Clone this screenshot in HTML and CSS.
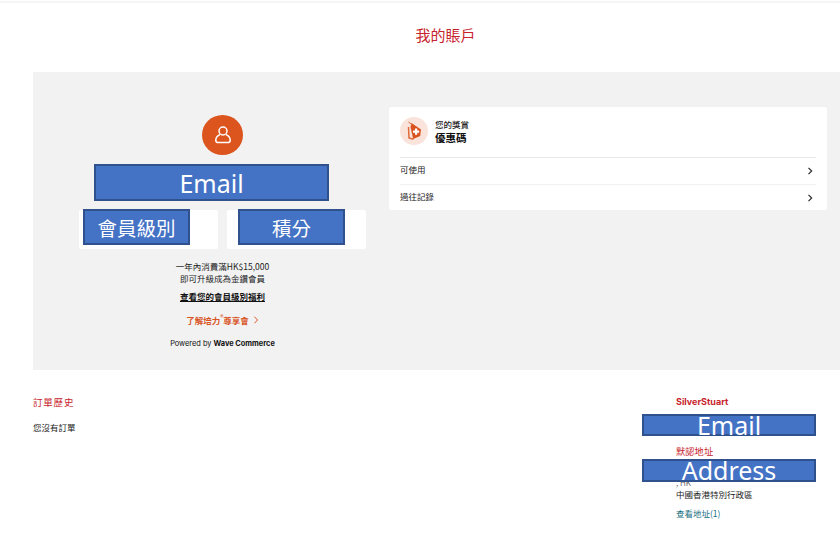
FILE: index.html
```html
<!DOCTYPE html>
<html lang="zh-Hant">
<head>
<meta charset="utf-8">
<title>我的賬戶</title>
<link rel="stylesheet" href="styles.css">
</head>
<body>
<div class="topline"></div>
<h1 class="title">我的賬戶</h1>
<main class="panel">
  <section class="member">
    <div class="avatar">
      <svg width="20" height="20" viewBox="0 0 20 20" fill="none" stroke="#fff" stroke-width="1.500">
        <circle cx="10" cy="6" r="4"/>
        <path d="M7 9.600C4.600 10.600 2.800 12.600 2.800 15.200c0 1.600 1 2.400 2.400 2.400h9.600c1.400 0 2.400-.8 2.400-2.400 0-2.600-1.800-4.600-4.200-5.600"/>
      </svg>
    </div>
    <div class="mask mask-email">Email</div>
    <div class="stats">
      <div class="stat"><div class="mask mask-stat mask-level">會員級別</div></div>
      <div class="stat"><div class="mask mask-stat mask-points">積分</div></div>
    </div>
    <p class="upgrade">一年內消費滿HK$15,000<br>即可升級成為金鑽會員</p>
    <a class="benefits">查看您的會員級別福利</a>
    <a class="club"><span>了解培力<sup>®</sup>尊享會</span>
      <svg width="6" height="8" viewBox="0 0 6 8" fill="none" stroke="#d9531e" stroke-width="1"><path d="M1.500 .8 4.600 4 1.500 7.200"/></svg>
    </a>
    <p class="powered">Powered by <b>Wave Commerce</b></p>
  </section>
  <section class="rewards">
    <header class="rewards-head">
      <div class="tagicon">
        <svg width="28" height="28" viewBox="0 0 28 28">
          <path d="M8.500 10 9 21l4.500 1.200" fill="none" stroke="#e06a3c" stroke-width="1.500"/>
          <path d="M11.500 6 21 12.500l-.8 6.500-7 3L10.500 10z" fill="#d9531e"/>
          <path d="M15 11.500h2.200v2h2v2.200h-2v2H15v-2h-2v-2.200h2z" fill="#fff"/>
          <path d="M8.500 5l4 3" stroke="#e06a3c" fill="none"/>
        </svg>
      </div>
      <div class="rewards-title">
        <div class="eyebrow">您的獎賞</div>
        <div class="coupon">優惠碼</div>
      </div>
    </header>
    <div class="row row-first"><span class="row-label">可使用</span>
      <svg width="6" height="8" viewBox="0 0 6 8" fill="none" stroke="#222" stroke-width="1.100"><path d="M1.500 .8 4.700 4 1.500 7.200"/></svg>
    </div>
    <div class="row row-last"><span class="row-label">過往記錄</span>
      <svg width="6" height="8" viewBox="0 0 6 8" fill="none" stroke="#222" stroke-width="1.100"><path d="M1.500 .8 4.700 4 1.500 7.200"/></svg>
    </div>
  </section>
</main>
<div class="lower">
  <section class="orders">
    <h2 class="orders-title">訂單歷史</h2>
    <p class="orders-empty">您沒有訂單</p>
  </section>
  <section class="account">
    <div class="name">SilverStuart</div>
    <div class="mask mask-small mask-mail">Email</div>
    <div class="addr-title">默認地址</div>
    <div class="mask mask-small mask-addr">Address</div>
    <div class="addr-peek">, HK</div>
    <div class="addr-line">中國香港特別行政區</div>
    <a class="addr-link">查看地址(1)</a>
  </section>
</div>
</body>
</html>
```
FILE: styles.css
```css
* { box-sizing: border-box; }
html, body { margin: 0; padding: 0; }
body {
  width: 840px;
  height: 560px;
  overflow: hidden;
  background: #fff;
  color: #222;
  font-family: "Noto Sans CJK TC", "Noto Sans", sans-serif;
  font-size: 8.5px;
}
p, h1, h2 { margin: 0; font-weight: 400; }
.topline { height: 2px; margin-top: 1px; background: #f5f5f5; }
.title {
  height: 69px;
  padding: 21px 0 0 51px;
  margin: 0;
  text-align: center;
  font-size: 15px;
  line-height: 22px;
  color: #c8232c;
}
.panel {
  display: flex;
  align-items: flex-start;
  gap: 23px;
  height: 298px;
  margin-left: 33px;
  padding: 35px 13px 0 46px;
  background: #f2f2f2;
}
.member {
  position: relative;
  display: flex;
  flex-direction: column;
  align-items: center;
  width: 287px;
  padding-top: 8px;
  text-align: center;
}
.avatar {
  display: flex;
  align-items: center;
  justify-content: center;
  width: 41px;
  height: 40px;
  border-radius: 50%;
  background: #dc541e;
}
.mask {
  display: flex;
  align-items: center;
  justify-content: center;
  border: 2px solid #2f528f;
  background: #4472c4;
  color: #fff;
  font-family: "Noto Sans", "Noto Sans CJK TC", sans-serif;
  white-space: nowrap;
}
.mask-email {
  width: 235px;
  height: 37px;
  margin: 9px 22px 9px 0;
  font-size: 25px;
}
.stats { display: flex; gap: 9px; }
.stat {
  position: relative;
  width: 139px;
  height: 39px;
  border-radius: 2px;
  background: #fff;
}
.mask-stat {
  position: absolute;
  top: -1px;
  width: 107px;
  height: 36px;
  font-family: "Noto Sans CJK TC", sans-serif;
  font-size: 19.500px;
}
.mask-level { left: 4px; }
.mask-points { left: 11px; }
.upgrade { margin-top: 11px; line-height: 12px; }
.benefits {
  margin-top: 6px;
  font-weight: 700;
  line-height: 12px;
  color: #111;
  text-decoration: underline;
}
.club {
  display: flex;
  align-items: center;
  gap: 4px;
  margin-top: 12px;
  line-height: 12px;
  font-weight: 700;
  color: #d9531e;
}
.club sup { font-size: 6px; line-height: 0; }
.powered {
  margin-top: 12px;
  font-family: "Inter", sans-serif;
  font-size: 7.400px;
  line-height: 12px;
  color: #111;
}
.rewards {
  width: 438px;
  height: 103px;
  padding: 10px 11px 0;
  border-radius: 2px;
  background: #fff;
}
.rewards-head {
  display: flex;
  align-items: flex-start;
  gap: 7px;
  height: 41px;
  border-bottom: 1px solid #e8e8e8;
}
.rewards-title { padding-top: 1px; }
.tagicon {
  width: 28px;
  height: 28px;
  border-radius: 50%;
  background: #fae3db;
}
.eyebrow { font-size: 8.500px; line-height: 12px; font-weight: 500; }
.coupon { font-size: 10.500px; line-height: 15px; font-weight: 700; color: #111; }
.row {
  display: flex;
  align-items: center;
  justify-content: space-between;
  height: 26px;
  padding-right: 3px;
  border-top: 1px solid #f1f1f1;
}
.row-first { border-top: 0; }
.row-label { padding-bottom: 5px; }
.row-last .row-label { padding-bottom: 3px; }
.lower {
  display: flex;
  justify-content: space-between;
  padding: 24px 24px 0 33px;
}
.orders-title {
  font-size: 9.500px;
  line-height: 16px;
  letter-spacing: .8px;
  color: #c8232c;
}
.orders-empty { margin-top: 11px; line-height: 12px; }
.account { display: flex; flex-direction: column; width: 174px; padding-top: 1px; }
.name,
.addr-title,
.addr-peek,
.addr-line,
.addr-link { margin-left: 34px; }
.name {
  font-family: "Inter", sans-serif;
  font-size: 9px;
  font-weight: 700;
  line-height: 13px;
  color: #c8232c;
}
.mask-small {
  position: relative;
  z-index: 1;
  width: 174px;
  height: 22px;
  font-size: 25px;
  line-height: 1;
}
.mask-mail { margin-top: 6px; }
.addr-title {
  margin-top: 8px;
  font-size: 9.300px;
  line-height: 14px;
  color: #c8232c;
}
.mask-addr { margin-top: 1px; height: 23px; }
.addr-peek { height: 6px; margin-top: -3px; font-size: 8px; line-height: 8px; color: #666; }
.addr-line { margin-top: 3px; line-height: 12px; }
.addr-link { margin-top: 7px; line-height: 12px; color: #17707f; }
```
